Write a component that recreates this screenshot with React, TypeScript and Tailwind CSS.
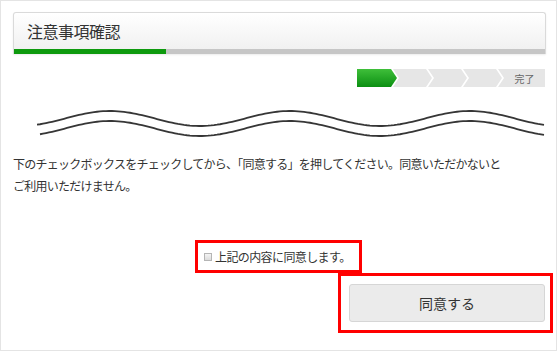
const wave = (x0: number, x1: number, yMid: number) => {
    const pts: string[] = [];
    for (let x = x0; x <= x1; x += 3) {
        const y = yMid - 7.5 * Math.cos((2 * Math.PI * (x + 13 - 110)) / 180);
        pts.push(`${x.toFixed(1)},${y.toFixed(2)}`);
    }
    return "M" + pts.join(" L");
};

const Steps = () => (
    <div className="relative w-[188px] h-[18px]">
        <svg width="188" height="18" viewBox="0 0 188 18" className="block">
            <defs>
                <linearGradient id="g" x1="0" y1="0" x2="0" y2="1">
                    <stop offset="0" stopColor="#3fbf3a" />
                    <stop offset="1" stopColor="#0b8f12" />
                </linearGradient>
            </defs>
            <path d="M0,0 H34 L40,9 L34,18 H0 Z" fill="url(#g)" />
            <path d="M36,0 H69 L75,9 L69,18 H36 L42,9 Z" fill="#e6e6e6" />
            <path d="M71,0 H104 L110,9 L104,18 H71 L77,9 Z" fill="#e6e6e6" />
            <path d="M106,0 H139 L145,9 L139,18 H106 L112,9 Z" fill="#e6e6e6" />
            <path d="M141,0 H188 V18 H141 L147,9 Z" fill="#e6e6e6" />
        </svg>
        <span className="absolute left-[147px] right-0 top-0 h-[18px] flex items-center justify-center text-[10px] text-[#666]">
            完了
        </span>
    </div>
);

export default function App() {
    return (
        <div
            className="w-[560px] h-[351px] bg-white text-[#333]"
            style={{ fontFamily: '"Noto Sans CJK JP", "Noto Sans", sans-serif' }}
        >
            <div className="w-[557px] h-[351px] border border-[#e4e4e4] pl-[12px] pr-[10px] pt-[11px]">
                {/* Header */}
                <div className="w-[533px] h-[42px] flex flex-col border-x border-t border-[#dadada] rounded-t-[3px] bg-gradient-to-b from-[#ffffff] to-[#efefef] shadow-[0_1px_2px_rgba(0,0,0,0.08)] overflow-hidden">
                    <div className="flex-1 flex items-center pl-[13px] text-[16px] tracking-[-0.5px] text-[#333]">
                        注意事項確認
                    </div>
                    <div className="flex h-[5px]">
                        <div className="w-[152px] bg-[#0e9a0e]" />
                        <div className="flex-1 bg-[#c6c6c6]" />
                    </div>
                </div>

                {/* Progress */}
                <div className="flex justify-end mt-[15px] pr-[1px]">
                    <Steps />
                </div>

                {/* Wave */}
                <svg width="533" height="40" viewBox="0 0 533 40" className="block mt-[14px]">
                    <path d={wave(24, 532, 17.5)} fill="none" stroke="#363636" strokeWidth="1.8" />
                    <path d={wave(27, 532, 27.5)} fill="none" stroke="#363636" strokeWidth="1.8" />
                </svg>

                {/* Message */}
                <p className="mt-[12px] text-[12px] leading-[22px] tracking-[-0.75px] text-[#333]">
                    下のチェックボックスをチェックしてから、「同意する」を押してください。同意いただかないと
                    <br />
                    ご利用いただけません。
                </p>

                {/* Agree checkbox */}
                <div className="flex justify-center mt-[43px] pr-[2px]">
                    <label className="w-[167px] h-[33px] border-[3px] border-[#ff0000] flex items-center pl-[6px] gap-[3px]">
                        <span className="w-[8px] h-[8px] border border-[#b5b5b5] bg-gradient-to-b from-[#f4f4f4] to-[#dcdcdc]" />
                        <span className="text-[12px] tracking-[-0.6px] text-[#333]">上記の内容に同意します。</span>
                    </label>
                </div>

                {/* Submit */}
                <div className="flex justify-end -mr-[7px]">
                    <div className="w-[215px] h-[60px] border-[3px] border-[#ff0000] pl-[8px] pr-[5px] pt-[8px]">
                        <button className="w-[196px] h-[38px] rounded-[3px] border border-[#d6d6d6] bg-[#ebebeb] text-[14px] text-[#333] flex items-center justify-center">
                            同意する
                        </button>
                    </div>
                </div>
            </div>
        </div>
    );
}
